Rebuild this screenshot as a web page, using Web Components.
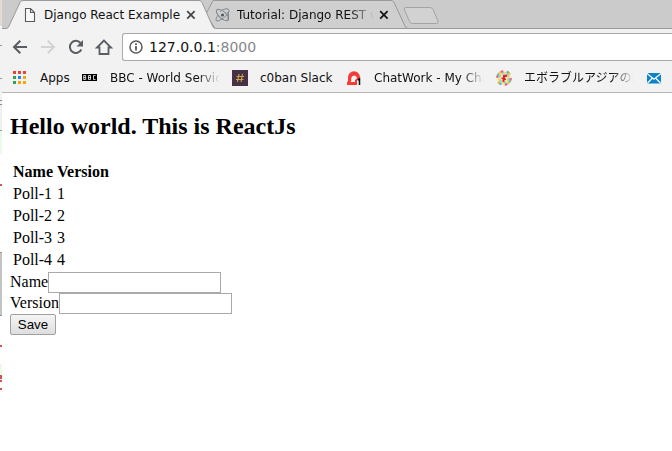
<!DOCTYPE html>
<html lang="en"><head><meta charset="utf-8"><title>Django React Example</title>
<style>html,body{margin:0;height:451px;overflow:hidden;background:#fff}</style></head>
<body>
<browser-window>
  <tab-strip slot="chrome">
    <browser-tab active><chrome-icon name="page" slot="icon"></chrome-icon>Django React Example</browser-tab>
    <browser-tab><chrome-icon name="react" slot="icon"></chrome-icon>Tutorial: Django REST with React</browser-tab>
  </tab-strip>
  <nav-bar slot="chrome">127.0.0.1<span slot="port">:8000</span></nav-bar>
  <bookmark-bar slot="chrome">
    <bookmark-item style="--w:70px"><chrome-icon name="apps" slot="icon"></chrome-icon>Apps</bookmark-item>
    <bookmark-item fade style="--w:150px"><chrome-icon name="bbc" slot="icon"></chrome-icon>BBC - World Service</bookmark-item>
    <bookmark-item style="--w:114px"><chrome-icon name="hash" slot="icon"></chrome-icon>c0ban Slack</bookmark-item>
    <bookmark-item fade style="--w:150px"><chrome-icon name="chat" slot="icon"></chrome-icon>ChatWork - My Chat</bookmark-item>
    <bookmark-item fade style="--w:150px"><chrome-icon name="ball" slot="icon"></chrome-icon>エボラブルアジアの法</bookmark-item>
    <bookmark-item style="--w:30px"><chrome-icon name="mail" slot="icon"></chrome-icon></bookmark-item>
  </bookmark-bar>
  <poll-page></poll-page>
</browser-window>
<script>
const define = (name, html, setup) => customElements.define(name, class extends HTMLElement {
  constructor() {
    super();
    this.attachShadow({mode: 'open'}).innerHTML = html;
  }
  connectedCallback() { if (setup) setup(this, this.shadowRoot); }
});

const icons = {
  page: [16, 16, '<path d="M3.5 1.5h5l4 4v9h-9zM8.5 1.5v4h4" fill="#fafafa" stroke="#5a5a5a" stroke-width="1.1"/>'],
  react: [16, 16, '<g fill="none" stroke="#7c858d" stroke-width="1"><ellipse cx="7.500" cy="8" rx="7.600" ry="3.400" transform="rotate(42 7.500 8)"/><path d="M5 4.500C9 1.500 13.500 1 14 3.200S11 9.500 7 12 .8 14.500 1 12.500 2 10 3 8.500M12.500 5c1.500 2.500 1.500 6-.5 7.500"/></g><circle cx="7.500" cy="8" r="1.600" fill="#4c5862"/>'],
  close: [10, 10, '<path d="M1.2 1.2l7.4 7.4M8.6 1.2L1.2 8.6" stroke="currentColor" stroke-width="1.7"/>'],
  back: [16, 16, '<path d="M15 8H2.5M8.3 1.7L2 8l6.3 6.3" fill="none" stroke="#5a5d63" stroke-width="2"/>'],
  forward: [16, 16, '<path d="M1 8h12.500M7.700 1.700L14 8l-6.300 6.300" fill="none" stroke="#d2d3d5" stroke-width="2"/>'],
  reload: [16, 16, '<path d="M13.3 10.500a6 6 0 1 1-.8-6.500" fill="none" stroke="#5a5d63" stroke-width="2"/><path d="M15 1v6.500H8.500z" fill="#5a5d63"/>'],
  home: [18, 16, '<path d="M9 1.500L2 8.500h2.500V15h9V8.500H16z" fill="none" stroke="#5a5d63" stroke-width="1.8"/>'],
  info: [14, 14, '<circle cx="7" cy="7" r="6" fill="none" stroke="#5a5a5a" stroke-width="1.500"/><path d="M6.100 6h1.800v4.500H6.100zM6.100 3.300h1.800v1.700H6.100z" fill="#5a5a5a"/>'],
  apps: [16, 16, '<path d="M1 1h3v3H1zM6 1h3v3H6zM11 1h3v3h-3z" fill="#ea4335"/><path d="M1 6h3v3H1zM1 11h3v3H1z" fill="#34a053"/><path d="M6 6h3v3H6z" fill="#1e88f5"/><path d="M11 6h3v3h-3zM6 11h3v3H6zM11 11h3v3h-3z" fill="#f5a60b"/>'],
  bbc: [16, 16, '<path d="M0 4h15v7H0z"/><g fill="none" stroke="#fff" stroke-width=".8"><path d="M1.700 5.500v4h2v-4zM1.700 7.500h2M6.500 5.500v4h2v-4zM6.500 7.500h2M13.500 5.500h-2v4h2"/></g>'],
  hash: [16, 16, '<path d="M0 0h16v16H0z" fill="#473144"/><path d="M7 4L5.500 12M10.500 4L9 12M4.500 6.500h7.500M4 9.500h7.500" stroke="#c9a548" stroke-width="1.100"/>'],
  chat: [16, 16, '<path d="M1 15V12.500L2 11V7.500a6 6.200 0 0 1 12 0V9l-3 1.500V15zM5.300 8v2.800L4.500 12H9V10l2-1.500V8a2.900 3.200 0 0 0-5.700 0z" fill="#f63c39" fill-rule="evenodd"/><path d="M11.800 10.200l1.700-1.200V15" fill="none" stroke="#111" stroke-width="1.500"/>'],
  ball: [16, 16, '<circle cx="8" cy="8" r="7.800" fill="#f6efb8"/><g fill="none" stroke-width="2.400"><circle cx="8" cy="8" r="6.600" stroke="#f0578c" stroke-dasharray="2.600 4.310"/><circle cx="8" cy="8" r="6.600" stroke="#45c3cf" stroke-dasharray="2 8.370" stroke-dashoffset="-2.500"/><circle cx="8" cy="8" r="6.600" stroke="#f6c234" stroke-dasharray="2 8.370" stroke-dashoffset="-4.600"/><circle cx="8" cy="8" r="4.600" stroke="#8bd9d0" stroke-dasharray="2.200 2.610"/><circle cx="8" cy="8" r="4.600" stroke="#f6c86c" stroke-dasharray="1.400 3.410" stroke-dashoffset="-2.200"/></g><path d="M7 5l4-.5v2.300L9 7.300v1l1 .4V10H8.500v2h-2V9H5.500V7.500H7z" fill="#e6202c"/>'],
  mail: [16, 16, '<rect x="1" y="3" width="14" height="10.500" rx="1" fill="#0c82ca"/><path d="M1 3.500l7 5.800 7-5.800M1.500 13l5-5M14.500 13l-5-5" fill="none" stroke="#fff" stroke-width="1.200"/>']
};
define('chrome-icon', '<style>:host{display:block;flex:none}svg{display:block}</style>', (el, root) => {
  const [w, h, body] = icons[el.getAttribute('name')];
  root.innerHTML += `<svg width="${w}" height="${h}" viewBox="0 0 ${w} ${h}">${body}</svg>`;
});

define('browser-window', `<style>
  :host{display:grid;grid-template-columns:2px 670px;width:672px;height:451px;background:#fff;font:12px "DejaVu Sans","Noto Sans CJK JP",sans-serif;color:#111}
  .edge{background:linear-gradient(#e3dbd0 0 26px,#f2f2f2 26px 45px,#999 45px 46px,#f2f2f2 46px 78px,#999 78px 79px,#f2f2f2 79px 100px,#888 100px 101px,#f2f2f2 101px 104px,#888 104px 105px,#f0f0f0 105px 130px,#999 130px 131px,#eafbe7 131px 154px,#fff 154px 184px,#d05656 184px 186px,#fff 186px 252px,#999 252px 253px,#c3c3c3 253px 315px,#a08f8f 315px 316px,#fff 316px 345px,#d05656 345px 347px,#fff 347px 364px,#eafbe7 364px 375px,#d05656 375px 379px,#fff 379px 380px,#d05656 380px 382px,#fff 382px 388px,#d05656 388px 390px,#fff 390px)}
  main{display:flex;flex-direction:column;min-width:0}
  </style><div class="edge"></div><main><slot name="chrome"></slot><slot></slot></main>`);

define('tab-strip', `<style>
  :host{display:grid;height:29px;background:#cbcbcb}
  svg,.tabs{grid-area:1/1}
  svg{display:block}
  .tabs{display:flex;padding-left:20px}
  </style><svg width="670" height="29" viewBox="2 0 670 29">
  <path d="M2 28.500H672" stroke="#999"/>
  <path d="M206 14L213 .5H391q2 0 3 2L405 26q1 2.500 3 2.500H215z" fill="#cfcfcf" stroke="#999"/>
  <path d="M2 29v-.5H6q2 0 3-2.500L20 2.500q1-2 3-2H199q2 0 3 2L212.500 26q1 2.500 3 2.500V29z" fill="#f2f2f2"/>
  <path d="M2 28.500H6q2 0 3-2.500L20 2.500q1-2 3-2H199q2 0 3 2L212.500 26q1 2.500 3 2.500" fill="none" stroke="#999"/>
  <path d="M406 7.500h24q2 0 3 2l5 11.500q.5 2.500-1.500 2.500h-24q-2 0-3-2l-5-11.500q-1-2.500 1-2.500z" fill="#d2d2d2" stroke="#a3a3a3"/>
  </svg><div class="tabs"><slot></slot></div>`);

define('browser-tab', `<style>
  :host{display:flex;align-items:center;width:193px;height:29px;padding-top:1px;box-sizing:border-box;gap:6px}
  .t{width:137px;overflow:hidden;white-space:nowrap;line-height:16px}
  :host(:not([active])) .t{-webkit-mask-image:linear-gradient(90deg,#000 113px,transparent 137px);mask-image:linear-gradient(90deg,#000 113px,transparent 137px)}
  chrome-icon[name=close]{color:#444;margin-left:-1px}
  :host(:not([active])) chrome-icon[name=close]{color:#111}
  </style><slot name="icon"></slot><div class="t"><slot></slot></div><chrome-icon name="close"></chrome-icon>`);

define('nav-bar', `<style>
  :host{display:flex;align-items:center;height:33px;padding:4px 0 1px 10px;box-sizing:border-box;background:#f2f2f2}
  .buttons{display:flex;align-items:center;gap:12px;width:110px}
  .url{flex:1;display:flex;align-items:center;height:28px;box-sizing:border-box;border:1px solid #aaa;border-right:0;border-radius:3px 0 0 3px;background:#fff;padding-left:6px;font-size:14px}
  .url chrome-icon{margin-right:6px}
  ::slotted(span){color:#888}
  </style><div class="buttons"><chrome-icon name="back"></chrome-icon><chrome-icon name="forward"></chrome-icon><chrome-icon name="reload"></chrome-icon><chrome-icon name="home" style="margin-left:-1px"></chrome-icon></div>
  <div class="url"><chrome-icon name="info"></chrome-icon><slot></slot><slot name="port"></slot></div>`);

define('bookmark-bar', `<style>
  :host{display:flex;align-items:center;height:31px;box-sizing:border-box;padding:2px 0 0 10px;background:#f2f2f2;border-bottom:1px solid #b4b4b4;overflow:hidden}
  </style><slot></slot>`);
define('bookmark-item', `<style>
  :host{display:flex;align-items:center;gap:12px;flex:none;width:var(--w)}
  .t{width:110px;height:16px;line-height:16px;overflow:hidden;white-space:nowrap}
  :host([fade]) .t{-webkit-mask-image:linear-gradient(90deg,#000 88px,transparent 110px);mask-image:linear-gradient(90deg,#000 88px,transparent 110px)}
  </style><slot name="icon"></slot><div class="t"><slot></slot></div>`);

define('poll-field', `<style>
  :host{display:flex;height:21px}
  label{line-height:19px}
  input{width:173px;height:21px;box-sizing:border-box;border:1px solid #a9a9a9;background:#fff;margin:0;padding:1px;border-radius:0}
  </style><label><slot></slot></label><input>`);
define('save-button', `<style>
  :host{display:block;height:21px}
  button{display:block;width:46px;height:21px;margin:0;padding:0;border:1px solid #a0a0a0;border-radius:2px;background:linear-gradient(#f5f5f5,#dedede);font:13.333px "Liberation Sans",sans-serif;color:#000}
  </style><button><slot></slot></button>`);
define('poll-page', `<style>
  :host{display:block;padding:0 8px;font:16px "Liberation Serif",serif;color:#000}
  h2{font-size:24px;margin:20px 0;line-height:27px}
  table{border-spacing:2px;line-height:18px}
  td,th{padding:1px;text-align:left}
  </style><h2>Hello world. This is ReactJs</h2>
  <table><thead><tr><th>Name</th><th>Version</th></tr></thead><tbody></tbody></table>
  <poll-field>Name</poll-field><poll-field>Version</poll-field><save-button>Save</save-button>`,
  (el, root) => {
    root.querySelector('tbody').innerHTML = [1, 2, 3, 4].map(n => `<tr><td>Poll-${n}</td><td>${n}</td></tr>`).join('');
  });
</script>
</body></html>
